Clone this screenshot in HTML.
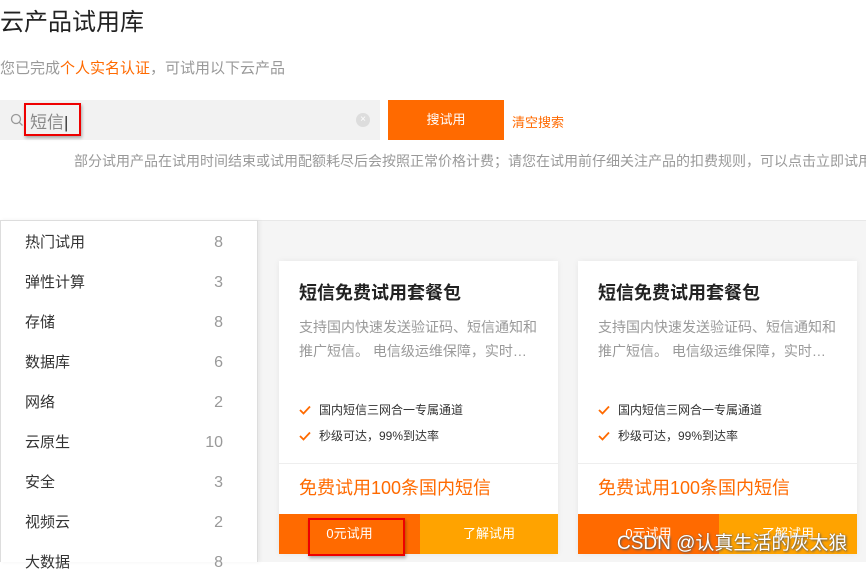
<!DOCTYPE html>
<html><head><meta charset="utf-8"><style>
*{margin:0;padding:0;box-sizing:border-box}
body{width:866px;height:562px;overflow:hidden;background:#fff;font-family:"Liberation Sans","Noto Sans CJK SC",sans-serif;position:relative;color:#333}
.abs{position:absolute;white-space:nowrap}
.gray{position:absolute;left:0;top:220px;width:866px;height:342px;background:#f5f5f5;border-top:1px solid #e8e8e8}
.side{position:absolute;left:0;top:220px;width:258px;height:342px;background:#fff;border:1px solid #ddd;border-bottom:none;box-shadow:2px 0 4px rgba(0,0,0,.06)}
.item{position:absolute;left:24px;width:198px;font-size:15px;color:#333;display:flex;justify-content:space-between;line-height:20px}
.item span:last-child{color:#999;font-size:16px}
.card{position:absolute;top:261px;width:279px;height:293px;background:#fff;box-shadow:0 0 6px rgba(0,0,0,.06)}
.card h3{position:absolute;left:20px;top:18px;font-size:18px;font-weight:bold;color:#222;white-space:nowrap}
.desc{position:absolute;left:20px;top:54px;width:245px;font-size:14px;line-height:24px;color:#999}
.feat{position:absolute;left:20px;font-size:12px;color:#333;white-space:nowrap;display:flex;align-items:center}
.feat svg{margin-right:8px}
.div{position:absolute;left:0;top:202px;width:100%;height:1px;background:#eee}
.price{position:absolute;left:20px;top:213px;font-size:18px;color:#ff6a00;white-space:nowrap}
.b1,.b2{position:absolute;top:253px;height:40px;line-height:40px;color:#fff;font-size:13px;text-align:center}
.b1{left:0;width:141px;background:#ff6a00}
.b2{left:141px;width:138px;background:#ffa300}
</style></head><body>
<div class="abs" style="left:0;top:2px;font-size:24px;color:#222">云产品试用库</div>
<div class="abs" style="left:0;top:57px;font-size:15px;color:#999">您已完成<span style="color:#ff6a00">个人实名认证</span>，可试用以下云产品</div>
<div class="abs" style="left:0;top:100px;width:380px;height:40px;background:#f2f2f2"></div>
<svg class="abs" style="left:10px;top:113px" width="14" height="14" viewBox="0 0 14 14"><circle cx="6" cy="6" r="4.5" fill="none" stroke="#999" stroke-width="1.3"/><path d="M9.3 9.3L12.5 12.5" stroke="#999" stroke-width="1.3"/></svg>
<div class="abs" style="left:24px;top:103px;width:57px;height:33px;border:2px solid #e00;box-shadow:1px 2px 3px rgba(0,0,0,.3)"></div>
<div class="abs" style="left:30px;top:108px;font-size:17px;color:#888">短信<span style="color:#333;font-weight:100">|</span></div>
<div class="abs" style="left:356px;top:113px;width:14px;height:14px;border-radius:50%;background:#ddd;color:#fff;font-size:10px;line-height:14px;text-align:center">×</div>
<div class="abs" style="left:388px;top:100px;width:116px;height:40px;background:#ff6a00;color:#fff;font-size:13px;line-height:40px;text-align:center">搜试用</div>
<div class="abs" style="left:512px;top:112px;font-size:13px;color:#ff6a00">清空搜索</div>
<div class="abs" style="left:74px;top:151px;font-size:14px;color:#999">部分试用产品在试用时间结束或试用配额耗尽后会按照正常价格计费；请您在试用前仔细关注产品的扣费规则，可以点击立即试用</div>
<div class="gray"></div>
<div class="side">
<div class="item" style="top:12px"><span>热门试用</span><span>8</span></div>
<div class="item" style="top:52px"><span>弹性计算</span><span>3</span></div>
<div class="item" style="top:92px"><span>存储</span><span>8</span></div>
<div class="item" style="top:132px"><span>数据库</span><span>6</span></div>
<div class="item" style="top:172px"><span>网络</span><span>2</span></div>
<div class="item" style="top:212px"><span>云原生</span><span>10</span></div>
<div class="item" style="top:252px"><span>安全</span><span>3</span></div>
<div class="item" style="top:292px"><span>视频云</span><span>2</span></div>
<div class="item" style="top:332px"><span>大数据</span><span>8</span></div>
</div>
<div class="card" style="left:279px">
<h3>短信免费试用套餐包</h3>
<div class="desc">支持国内快速发送验证码、短信通知和推广短信。 电信级运维保障，实时…</div>
<div class="feat" style="top:140px"><svg width="12" height="10" viewBox="0 0 12 10"><path d="M1 5L4.5 8.5L11 1.5" fill="none" stroke="#ff6a00" stroke-width="1.8"/></svg>国内短信三网合一专属通道</div>
<div class="feat" style="top:166px"><svg width="12" height="10" viewBox="0 0 12 10"><path d="M1 5L4.5 8.5L11 1.5" fill="none" stroke="#ff6a00" stroke-width="1.8"/></svg>秒级可达，99%到达率</div>
<div class="div"></div>
<div class="price">免费试用100条国内短信</div>
<div class="b1">0元试用</div><div class="b2">了解试用</div>
</div>
<div class="abs" style="left:308px;top:518px;width:97px;height:38px;border:2px solid #e00;box-shadow:1px 2px 3px rgba(0,0,0,.3)"></div>
<div class="card" style="left:578px">
<h3>短信免费试用套餐包</h3>
<div class="desc">支持国内快速发送验证码、短信通知和推广短信。 电信级运维保障，实时…</div>
<div class="feat" style="top:140px"><svg width="12" height="10" viewBox="0 0 12 10"><path d="M1 5L4.5 8.5L11 1.5" fill="none" stroke="#ff6a00" stroke-width="1.8"/></svg>国内短信三网合一专属通道</div>
<div class="feat" style="top:166px"><svg width="12" height="10" viewBox="0 0 12 10"><path d="M1 5L4.5 8.5L11 1.5" fill="none" stroke="#ff6a00" stroke-width="1.8"/></svg>秒级可达，99%到达率</div>
<div class="div"></div>
<div class="price">免费试用100条国内短信</div>
<div class="b1">0元试用</div><div class="b2">了解试用</div>
</div>
<div class="abs" style="left:617px;top:528px;font-size:19px;color:#fff;text-shadow:1px 1px 2px #555,0 0 1px #555">CSDN @认真生活的灰太狼</div>
</body></html>
